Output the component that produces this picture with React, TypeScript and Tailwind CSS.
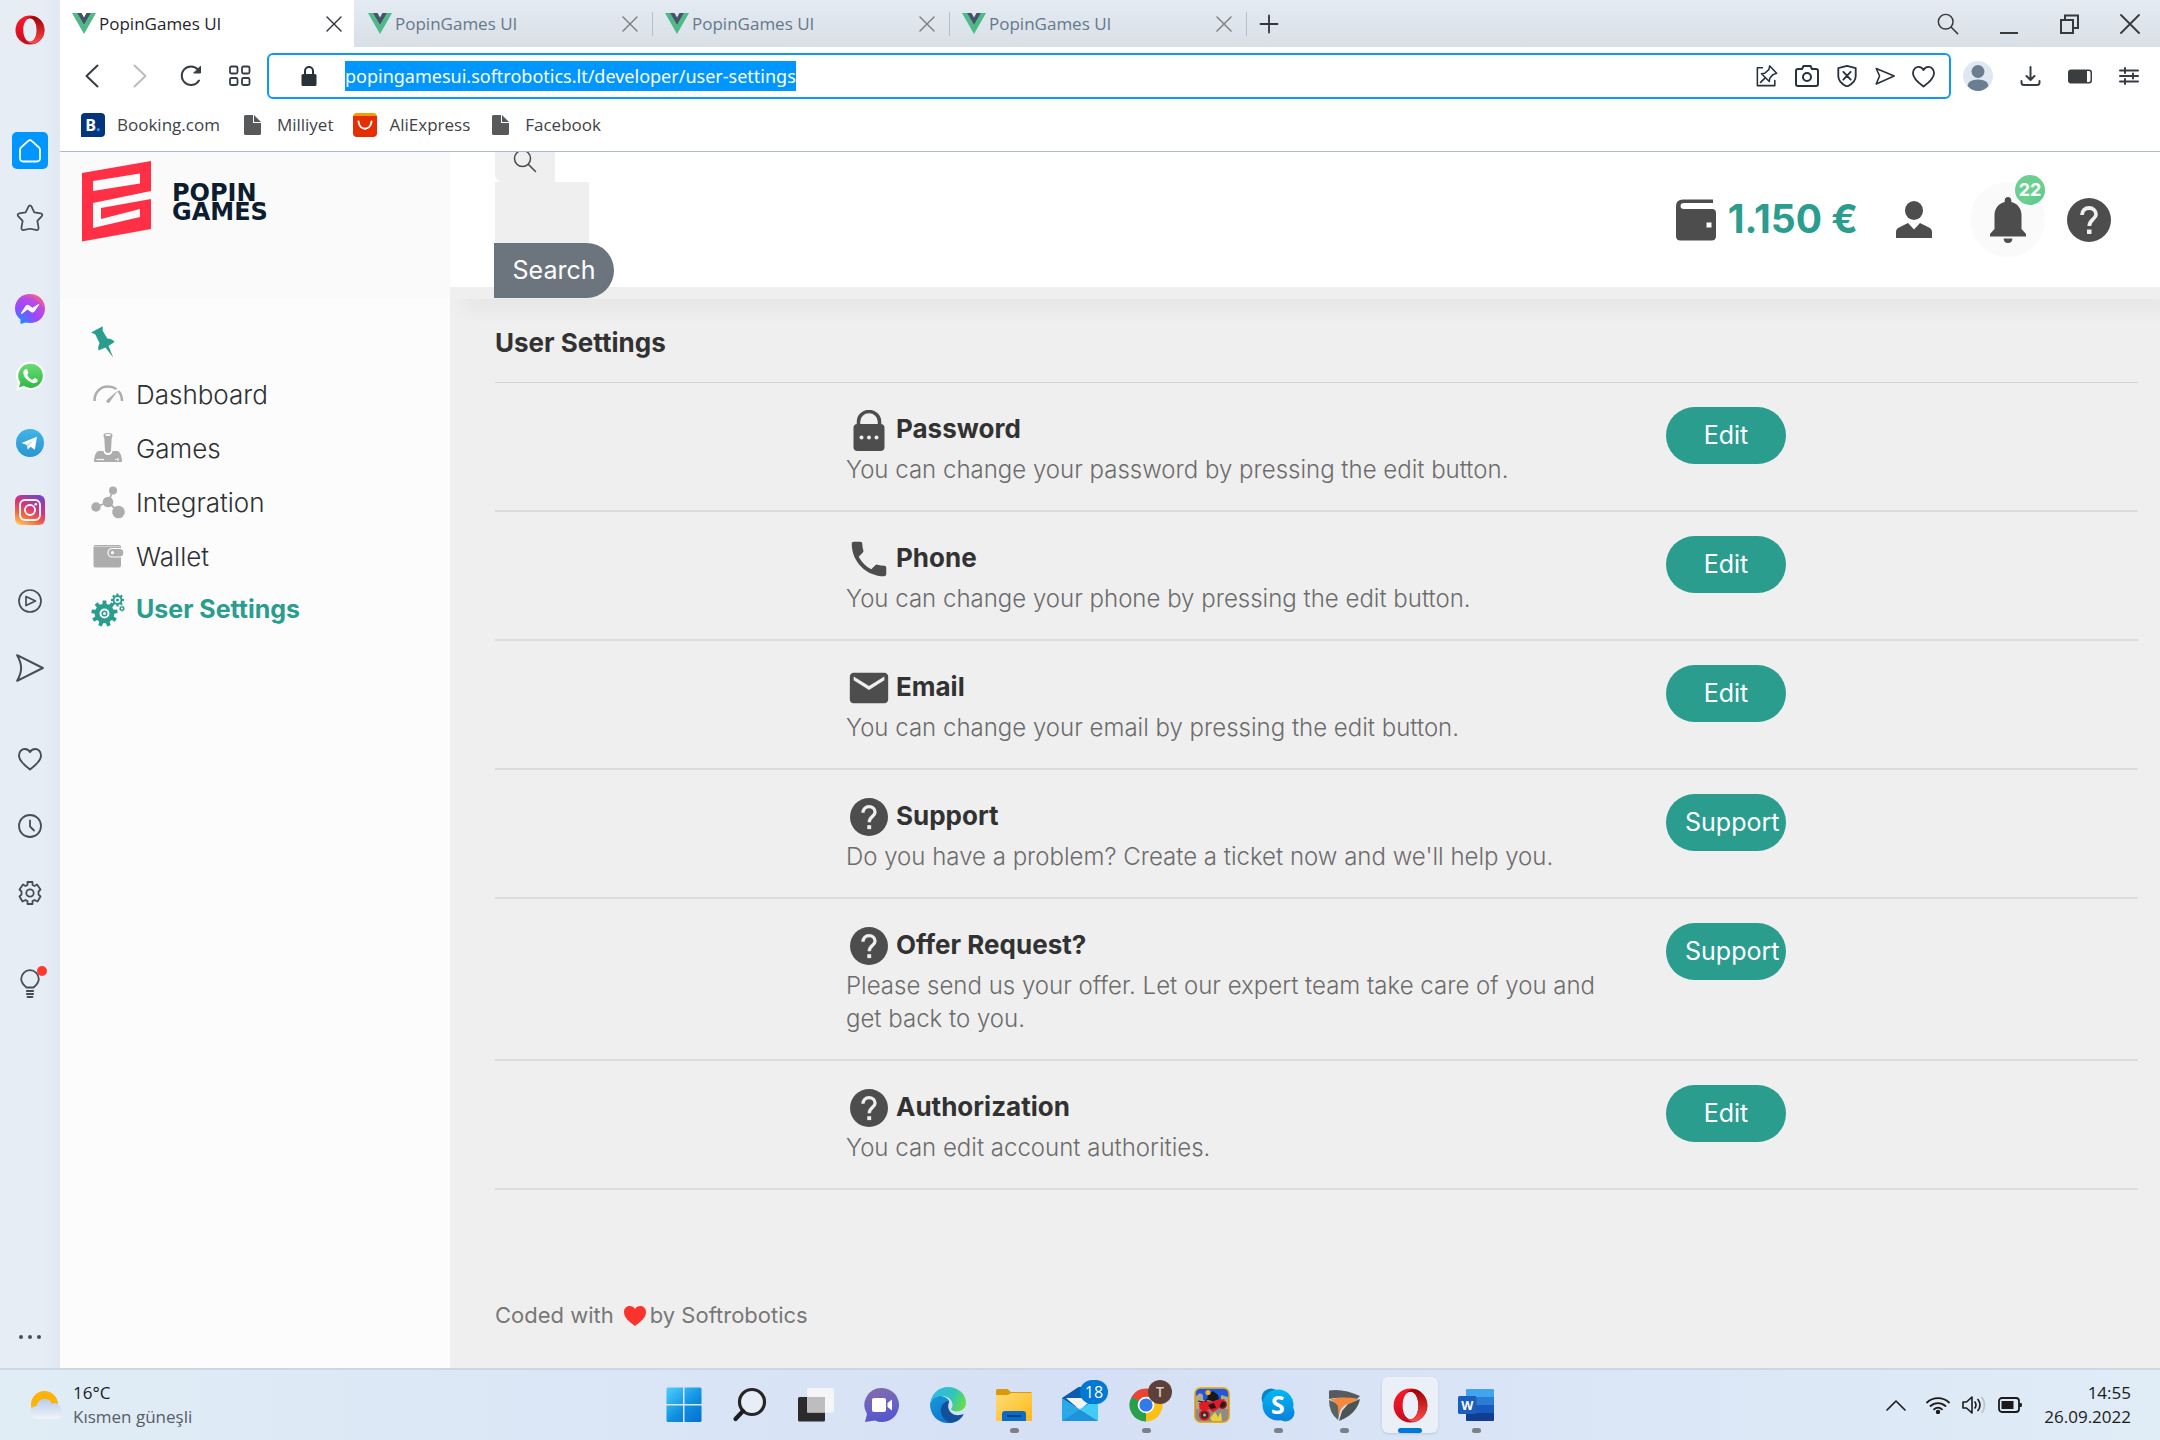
import React from "react";
import { MdPhone, MdEmail } from "react-icons/md";

type P = { className?: string };

const Svg = ({ className = "", vb = "0 0 24 24", sw = 1.6, children }: { className?: string; vb?: string; sw?: number; children: React.ReactNode }) => (
  <svg viewBox={vb} className={className} fill="none" stroke="currentColor" strokeWidth={sw} strokeLinecap="round" strokeLinejoin="round" aria-hidden="true">
    {children}
  </svg>
);

function gear(cx: number, cy: number, outer: number, inner: number, teeth: number, hole: number) {
  const pts: string[] = [];
  const step = (Math.PI * 2) / teeth;
  for (let i = 0; i < teeth; i++) {
    const a = i * step - Math.PI / 2;
    const spots: [number, number][] = [
      [-0.3, inner],
      [-0.2, outer],
      [0.2, outer],
      [0.3, inner],
    ];
    for (const [o, r] of spots) {
      pts.push(`${(cx + r * Math.cos(a + o * step)).toFixed(2)} ${(cy + r * Math.sin(a + o * step)).toFixed(2)}`);
    }
  }
  return `M${pts.join("L")}Z M${cx + hole} ${cy}A${hole} ${hole} 0 1 0 ${cx - hole} ${cy}A${hole} ${hole} 0 1 0 ${cx + hole} ${cy}Z`;
}

/* ---------- browser icons ---------- */

const OperaLogo = ({ className, id }: P & { id: string }) => (
  <svg viewBox="0 0 32 32" className={className} aria-hidden="true">
    <defs>
      <linearGradient id={`${id}a`} x1="0" y1="0" x2="0.4" y2="1">
        <stop offset="0" stopColor="#ff1b2d" />
        <stop offset="1" stopColor="#c40a1c" />
      </linearGradient>
      <linearGradient id={`${id}b`} x1="0" y1="0" x2="0" y2="1">
        <stop offset="0" stopColor="#9c0000" />
        <stop offset="1" stopColor="#ff4b4b" />
      </linearGradient>
    </defs>
    <path fillRule="evenodd" fill={`url(#${id}a)`} d="M16 0.5a15.5 15.5 0 1 0 0 31a15.5 15.5 0 1 0 0-31ZM16 3.5c4.2 0 7.2 5.500 7.200 12.500s-3 12.500-7.200 12.500s-7.200-5.500-7.200-12.500S11.800 3.500 16 3.500Z" />
    <path fill={`url(#${id}b)`} d="M11.500 5.500c1.300-1.300 2.800-2 4.500-2c4.200 0 7.200 5.500 7.200 12.500s-3 12.500-7.200 12.500c-1.700 0-3.200-.7-4.500-2c4 5.500 10 5.500 14.500 1.200a15.500 15.500 0 0 0 0-23.400c-4.500-4.300-10.500-4.300-14.500 1.200Z" />
  </svg>
);

const VueLogo = ({ className }: P) => (
  <svg viewBox="0 0 24 21" className={className} aria-hidden="true">
    <path d="M0 0h5L12 12L19 0h5L12 21Z" fill="#4dba87" />
    <path d="M5 0h4.500L12 4.500L14.500 0H19L12 12Z" fill="#435466" />
  </svg>
);

const Close = ({ className }: P) => (
  <Svg className={className} vb="0 0 16 16" sw={1.4}>
    <path d="M1 1l14 14M15 1L1 15" />
  </Svg>
);

const SearchGlyph = ({ className, sw = 1.6 }: P & { sw?: number }) => (
  <Svg className={className} sw={sw}>
    <circle cx="9.500" cy="9.500" r="8" />
    <path d="M15.500 15.500L22.500 22.500" />
  </Svg>
);

const HeartLine = ({ className }: P) => (
  <Svg className={className} sw={1.9}>
    <path d="M12 22.500C6 18 1 13.500 1 8.500C1 4.500 3.800 2 6.800 2C9 2 11 3.200 12 5.200C13 3.200 15 2 17.200 2C20.200 2 23 4.500 23 8.500C23 13.500 18 18 12 22.500Z" />
  </Svg>
);

const SendLine = ({ className }: P) => (
  <Svg className={className} sw={1.7}>
    <path d="M1 1L23 12L1 23C5.500 15 5.500 9 1 1Z" />
  </Svg>
);

const StarLine = ({ className }: P) => (
  <Svg className={className} sw={1.5}>
    <path d="M10.700 2.200Q12 0 13.300 2.200L15.700 7.200L21.200 8Q23.500 8.600 22 10.600L18.300 14.500L19.300 20Q19.600 22.800 17 22.200L12 21.200L7 22.200Q4.400 22.800 4.700 20L5.700 14.500L2 10.600Q.5 8.600 2.800 8L8.300 7.200Z" />
  </Svg>
);

const HomeLine = ({ className }: P) => (
  <Svg className={className} sw={1.8}>
    <path d="M12 1.200Q13 1.200 14 2.200L21 8.500Q22 9.500 22 11V19Q22 22.500 18.500 22.500H5.500Q2 22.500 2 19V11Q2 9.500 3 8.500L10 2.200Q11 1.200 12 1.200Z" />
  </Svg>
);

const Messenger = ({ className }: P) => (
  <svg viewBox="0 0 30 30" className={className} aria-hidden="true">
    <defs>
      <radialGradient id="msg" cx="0.15" cy="1" r="1.15">
        <stop offset="0" stopColor="#1292ff" />
        <stop offset="0.5" stopColor="#9b46ff" />
        <stop offset="0.8" stopColor="#c04ae0" />
        <stop offset="1" stopColor="#ff6a70" />
      </radialGradient>
    </defs>
    <path fill="url(#msg)" d="M15 0C23.500 0 30 6 30 14.500S23.500 29 15 29c-1.500 0-3-.2-4.300-.5L5.500 30V25.500C2 23 0 19 0 14.500C0 6 6.500 0 15 0Z" />
    <path fill="#fff" d="M6 19L10.800 11.600Q12.200 10 14 11.200L17.500 13.800L23.500 10Q24.700 9.600 24 11L19.300 17.800Q18 19.200 16.300 18.200L12.500 15.500L6.800 20Q5.600 20.300 6 19Z" />
  </svg>
);

const WhatsApp = ({ className }: P) => (
  <svg viewBox="0 0 30 30" className={className} aria-hidden="true">
    <defs>
      <linearGradient id="wa" x1="0" y1="0" x2="0" y2="1">
        <stop offset="0" stopColor="#6bdc76" />
        <stop offset="1" stopColor="#2fb944" />
      </linearGradient>
    </defs>
    <path fill="#fdfdfd" d="M15.500 0.500A14.200 14.200 0 1 1 8.500 27L1 29.500L3 22A14.200 14.200 0 0 1 15.500 0.500Z" />
    <path fill="url(#wa)" d="M15.500 2.700A12.100 12.100 0 1 1 8.800 24.700L4 26.500L5.300 21.500A12.100 12.100 0 0 1 15.500 2.700Z" />
    <path fill="#fff" d="M10.300 8.300C11 7.900 11.800 8 12.200 8.700L13.400 11.500C13.500 12.400 12.300 13.300 12.300 13.900C13.500 16.300 15.300 18 17.600 18.800C18.400 18.600 19 17.200 19.800 17.100L22.800 18.600C23 21 21.200 22.300 18.900 22.200C13.500 21.200 9.200 17 8.300 12.300C8.200 10.500 9 9 10.300 8.300Z" />
  </svg>
);

const Telegram = ({ className }: P) => (
  <svg viewBox="0 0 28 28" className={className} aria-hidden="true">
    <defs>
      <linearGradient id="tg" x1="0" y1="0" x2="0" y2="1">
        <stop offset="0" stopColor="#41b4e6" />
        <stop offset="1" stopColor="#2a95d3" />
      </linearGradient>
    </defs>
    <circle cx="14" cy="14" r="14" fill="url(#tg)" />
    <path d="M5.500 14L21 7.800L18.800 20.800L14.500 17.800L12 20.500L10.500 15.800Z" fill="#fff" />
    <path d="M10.500 15.800L18.500 10.300L12.600 16.800L12 20.500Z" fill="#c5dceb" />
  </svg>
);

const Instagram = ({ className }: P) => (
  <svg viewBox="0 0 30 30" className={className} aria-hidden="true">
    <defs>
      <linearGradient id="ig" x1="0.2" y1="1" x2="0.7" y2="0">
        <stop offset="0" stopColor="#fdc25c" />
        <stop offset="0.3" stopColor="#f4643f" />
        <stop offset="0.6" stopColor="#d9317c" />
        <stop offset="1" stopColor="#7a45c4" />
      </linearGradient>
    </defs>
    <rect width="30" height="30" rx="6" fill="url(#ig)" />
    <g fill="none" stroke="#fff" strokeWidth="1.900">
      <rect x="5" y="5" width="20" height="20" rx="5" />
      <circle cx="15" cy="15" r="5" />
    </g>
    <circle cx="20.800" cy="9.200" r="1.300" fill="#fff" />
  </svg>
);

const PlayCircle = ({ className }: P) => (
  <Svg className={className} sw={1.7}>
    <circle cx="12" cy="12" r="11" />
    <path d="M8 7.500L17.500 12L8 16.500Z" />
  </Svg>
);

const Clock = ({ className }: P) => (
  <Svg className={className} sw={1.8}>
    <circle cx="12" cy="12" r="11" />
    <path d="M12 6.500V12.500L16 16.500" />
  </Svg>
);

const GearLine = ({ className }: P) => (
  <Svg className={className} sw={1.8}>
    <path d="M9.500 1H14.500V4Q15.500 4.500 16.500 5L19 3.500L22.500 8.500L20.500 10.500V13.500L22.500 15.500L19.500 20.500L16.500 19Q15.500 19.700 14.500 20V23H9.500V20Q8.500 19.700 7.500 19L4.500 20.500L1.500 15.500L3.500 13.500V10.500L1.500 8.500L5 3.500L7.500 5Q8.500 4.500 9.500 4Z" />
    <circle cx="12" cy="12" r="3.700" />
  </Svg>
);

const Bulb = ({ className }: P) => (
  <Svg className={className} vb="0 0 20 30" sw={1.8}>
    <path d="M6.500 18.500C3.500 16 1.200 13.500 1.200 10A8.800 8.800 0 0 1 18.800 10C18.800 13.500 16.500 16 13.500 18.500Z" />
    <path d="M6.800 22H13.200M6.800 25H13.200M7.500 28H12.500" />
  </Svg>
);

const PadLock = ({ className }: P) => (
  <svg viewBox="0 0 16 20" className={className} aria-hidden="true">
    <path d="M4 9V5a4 4 0 0 1 8 0V9" fill="none" stroke="currentColor" strokeWidth="2" />
    <rect x="0.500" y="8" width="15" height="12" rx="1.500" fill="currentColor" />
  </svg>
);

const FileIcon = () => (
  <svg viewBox="0 0 17 20" className="h-5 w-[17px]" fill="#58595b" aria-hidden="true">
    <path d="M0 1.500Q0 0 1.500 0H9V8H17V18.500Q17 20 15.500 20H1.500Q0 20 0 18.500Z" />
    <path d="M10 0L17 7H10Z" />
  </svg>
);

/* ---------- page icons ---------- */

const HelpCircle = ({ className }: P) => (
  <svg viewBox="0 0 44 44" className={className} aria-hidden="true">
    <circle cx="22" cy="22" r="22" fill="#4d4d4d" />
    <path d="M15 17C15 12.800 18 10 22 10C26 10 29 12.700 29 16.500C29 21 22.300 21.500 22.300 28" fill="none" stroke="#efefef" strokeWidth="3.800" />
    <rect x="20" y="31.500" width="4.500" height="4.500" fill="#efefef" />
  </svg>
);

const PasswordLock = ({ className }: P) => (
  <svg viewBox="0 0 32 41" className={className} aria-hidden="true">
    <path d="M5.500 16V11.500a10.500 10 0 0 1 21 0V16" fill="none" stroke="#4d4d4d" strokeWidth="3.500" />
    <rect x="0.500" y="14" width="31" height="27" rx="4" fill="#4d4d4d" />
    <g fill="#efefef">
      <circle cx="8.500" cy="27.500" r="2" />
      <circle cx="16" cy="27.500" r="2" />
      <circle cx="23.500" cy="27.500" r="2" />
    </g>
  </svg>
);

const WalletDark = ({ className }: P) => (
  <svg viewBox="0 0 40 42" className={className} aria-hidden="true">
    <path fill="#4d4d4d" fillRule="evenodd" d="M7 0.500H37V4H8Q4.500 4 4.500 7T8 10H36Q40 10 40 14V37Q40 41.500 35.500 41.500H4.500Q0 41.500 0 37V7Q0 .5 7 .5ZM30.500 23.500V28.500H35.500V23.500Z" />
  </svg>
);

const Person = ({ className }: P) => (
  <svg viewBox="0 0 36 37" className={className} fill="#4d4d4d" aria-hidden="true">
    <ellipse cx="18" cy="9.500" rx="9" ry="9.500" />
    <path d="M0 37V31Q0 28 3 26.500L12 22L18 28.500L24 22L33 26.500Q36 28 36 31V37Z" />
  </svg>
);

const Bell = ({ className }: P) => (
  <svg viewBox="0 0 36 46" className={className} fill="#4d4d4d" aria-hidden="true">
    <path d="M18 0C20 0 21.300 1.500 21.300 3.500V5C27.500 6.500 31.500 11.500 31.500 18V32L36 37V39.500H0V37L4.500 32V18C4.500 11.500 8.500 6.500 14.700 5V3.500C14.700 1.500 16 0 18 0Z" />
    <path d="M13.500 41.500H22.500Q22 46 18 46T13.500 41.500Z" />
  </svg>
);

const PopinMark = ({ className }: P) => (
  <svg viewBox="0 0 69 81" className={className} fill="#ff2f46" aria-hidden="true">
    <path fillRule="evenodd" d="M0 12L69 0V30L11 42V67L58 56V48L19 58V47L69 38V68L0 80.500ZM11 20V30L58 22.500V12.500Z" />
  </svg>
);

const PushPin = ({ className }: P) => (
  <svg viewBox="0 0 24 32" className={className} fill="#2a9d8f" aria-hidden="true">
    <path d="M0 6.500L11.800 0.300L11.600 4.500L16.300 12.500Q21.500 12.500 23.500 16L17.500 20L22.200 31.500L14.500 21.500L7.500 24.500Q6.500 20.500 8.500 17L4.200 8.200Z" />
  </svg>
);

const GaugeIcon = () => (
  <svg viewBox="0 0 34 34" className="size-[34px]" fill="#adadad" aria-hidden="true">
    <path d="M3.500 24C3.500 15 9.500 9.500 17 9.500Q21.500 9.500 25.500 12" fill="none" stroke="#adadad" strokeWidth="2.500" />
    <path d="M27.500 14Q31 18 31 24" fill="none" stroke="#adadad" strokeWidth="2.500" />
    <path d="M27.500 13L18.500 25.300Q17 26.500 15.800 25.300T16 22.800Z" />
  </svg>
);

const JoystickIcon = () => (
  <svg viewBox="0 0 34 34" className="size-[34px]" fill="#adadad" aria-hidden="true">
    <path d="M12.500 4Q12.500 2 17 2T21.500 4Q21.500 6 20.700 7L20 20Q19.500 22 17 22T14 20L13.300 7Q12.500 6 12.500 4Z" />
    <ellipse cx="17" cy="4" rx="3" ry="0.900" fill="#fcfcfc" />
    <path d="M7 20H12.500Q13 24 17 24T21.500 20H27Q31 23 31 31H3Q3 23 7 20Z" />
    <path d="M5.500 28.500H13" stroke="#fcfcfc" strokeWidth="1.200" />
    <path d="M24 28.500h1.500M27 27v3" stroke="#fcfcfc" strokeWidth="1.200" />
  </svg>
);

const NodesIcon = () => (
  <svg viewBox="0 0 34 34" className="size-[34px]" fill="#adadad" aria-hidden="true">
    <path d="M5 22L17 17L22 6M17 17L27.500 27" stroke="#adadad" strokeWidth="1.800" fill="none" />
    <circle cx="5" cy="22" r="4.700" />
    <circle cx="17" cy="17" r="5.300" />
    <circle cx="22" cy="5.500" r="4" />
    <circle cx="27.500" cy="27" r="6.300" />
  </svg>
);

const WalletLight = () => (
  <svg viewBox="0 0 34 34" className="size-[34px]" aria-hidden="true">
    <rect x="2.500" y="6" width="27.500" height="22.500" rx="2" fill="#adadad" />
    <path d="M3 7.500H29" stroke="#cfcfcf" />
    <rect x="17" y="9.500" width="16" height="8.500" rx="4.200" fill="#adadad" stroke="#fcfcfc" strokeWidth="1.200" />
    <circle cx="21.500" cy="13.700" r="1.600" fill="#fcfcfc" />
  </svg>
);

const GearsIcon = () => (
  <svg viewBox="0 0 34 34" className="size-[34px]" fill="#2a9d8f" fillRule="evenodd" aria-hidden="true">
    <path d={gear(13.5, 20.5, 13.2, 9.8, 9, 5)} />
    <circle cx="13.500" cy="20.500" r="3" />
    <circle cx="13.500" cy="20.500" r="1.500" fill="#fcfcfc" />
    <path d={gear(26.5, 7, 6.6, 4.9, 8, 3)} />
    <circle cx="26.500" cy="7" r="1.500" />
    <path d={gear(31, 15.5, 3, 2.2, 7, 1.1)} />
  </svg>
);

/* ---------- taskbar icons ---------- */

const Start = () => (
  <svg viewBox="0 0 36 36" className="size-9" aria-hidden="true">
    <defs>
      <linearGradient id="win" gradientUnits="userSpaceOnUse" x1="0" y1="0" x2="30" y2="36">
        <stop offset="0" stopColor="#4fd0ff" />
        <stop offset="0.600" stopColor="#1090e0" />
        <stop offset="1" stopColor="#0673d2" />
      </linearGradient>
    </defs>
    <path fill="url(#win)" d="M1.500 .5H17V17H.5V1.500ZM18.500 .5H34.500L35.500 1.500V17H18.500ZM.5 18.500H17V35H1.500L.5 34ZM18.500 18.500H35.500V34L34.500 35H18.500Z" />
  </svg>
);

const TaskSearch = () => (
  <svg viewBox="0 0 36 36" className="size-9" aria-hidden="true">
    <circle cx="20" cy="15" r="12.500" fill="#e8eef8" stroke="#262626" strokeWidth="3.200" />
    <path d="M11 24L3.500 32" stroke="#1c1c1c" strokeWidth="4.200" strokeLinecap="round" />
  </svg>
);

const TaskView = () => (
  <svg viewBox="0 0 36 36" className="size-9" aria-hidden="true">
    <rect x="0" y="10" width="27" height="24.500" rx="1.500" fill="#2b2b2b" />
    <rect x="9" y="1" width="27" height="24.500" rx="1.500" fill="#f5f5f7" />
    <path d="M9 10H27V25.500H9Z" fill="#bdbdbd" />
  </svg>
);

const Chat = () => (
  <svg viewBox="0 0 36 36" className="size-9" aria-hidden="true">
    <defs>
      <linearGradient id="chat" x1="0.300" y1="0" x2="0.500" y2="1">
        <stop offset="0" stopColor="#8469a9" />
        <stop offset="0.500" stopColor="#6b62c4" />
        <stop offset="1" stopColor="#5355cc" />
      </linearGradient>
    </defs>
    <path fill="url(#chat)" d="M18 1A17 17 0 1 1 11 33.500L1 35L3 27A17 17 0 0 1 18 1Z" />
    <rect x="8" y="11" width="14" height="14" rx="2" fill="#fff" />
    <path d="M23.500 16L28 12.500V23.500L23.500 20Z" fill="#fff" />
  </svg>
);

const Edge = () => (
  <svg viewBox="0 0 36 36" className="size-9" aria-hidden="true">
    <defs>
      <linearGradient id="eg1" x1="0" y1="0.300" x2="1" y2="0.600">
        <stop offset="0" stopColor="#33b8e8" />
        <stop offset="0.550" stopColor="#2fc4c0" />
        <stop offset="1" stopColor="#66dd48" />
      </linearGradient>
      <linearGradient id="eg2" x1="0" y1="0" x2="0.700" y2="1">
        <stop offset="0" stopColor="#1899d8" />
        <stop offset="1" stopColor="#0c6fd0" />
      </linearGradient>
    </defs>
    <path fill="url(#eg2)" d="M0 17C2 10 8 8 13 9.500C18 11 20 14 19 16C14 19 15 28 23 30C28 31.500 32 28 33.500 27.500C30 34 24 36.500 17 36C7 35.500 0 27.500 0 17Z" />
    <path fill="#12509c" d="M19 14C9 15 7 30 20 35.800C26 35.500 31 32 33.800 27C30 28.500 25 29 21.500 26C18 23 17.500 19 19 14Z" />
    <path fill="url(#eg1)" d="M0.200 16C1.500 6.500 9 0 18 0C28 0 36 7 36 15.500C36 21 32 24.500 27 24.500C23.500 24.500 21 23.500 21 22.300C21 21.500 22.500 20.700 22.500 18C22.500 13 18 9 12 9C7 9 2.500 11 .2 16Z" />
  </svg>
);

const Explorer = () => (
  <svg viewBox="0 0 36 36" className="size-9" aria-hidden="true">
    <defs>
      <linearGradient id="fold" x1="0" y1="0" x2="1" y2="1">
        <stop offset="0" stopColor="#ffdc7a" />
        <stop offset="1" stopColor="#fdb913" />
      </linearGradient>
    </defs>
    <path d="M0 3.500Q0 2 1.500 2H11.500L15 5H34.500Q36 5 36 6.500V15H0Z" fill="#dd9a08" />
    <path d="M0 8H12L15 6H36V34H0Z" fill="url(#fold)" />
    <path d="M6 34V27Q6 24 9 24H27Q30 24 30 27V34Z" fill="#0c6cc4" />
    <path d="M11 29H25" stroke="#0a3f86" strokeWidth="1.800" />
  </svg>
);

const Mail = () => (
  <svg viewBox="0 0 36 36" className="size-9" aria-hidden="true">
    <path d="M0 11L18 -1L36 11V20H0Z" fill="#0b5cad" />
    <path d="M4 11H32L18 23Z" fill="#f4f4f6" />
    <path d="M0 11L36 34H0Z" fill="#29a9e8" />
    <path d="M36 11L18 22L36 34Z" fill="#40cdf5" />
    <path d="M0 34L18 22.500L36 34Z" fill="#1e93dc" />
  </svg>
);

const Chrome = () => (
  <svg viewBox="0 0 36 36" className="size-9" aria-hidden="true">
    <path d="M18 18L3.700 9.700A16.500 16.500 0 0 1 32.300 9.700Z" fill="#e94335" />
    <path d="M18 18L32.300 9.700A16.500 16.500 0 0 1 18 34.500Z" fill="#fcc014" />
    <path d="M18 18L18 34.500A16.500 16.500 0 0 1 3.700 9.700Z" fill="#2a9f4b" />
    <path d="M18 9.700H32.300L25 22L18 34.500Z" fill="#fcc014" />
    <path d="M3.700 9.700L11 22L18 26L18 18Z" fill="#2a9f4b" />
    <path d="M3.700 9.700H32.300V10.500H18L11 14Z" fill="#e94335" />
    <circle cx="18" cy="18" r="8.300" fill="#fff" />
    <circle cx="18" cy="18" r="6.600" fill="#3279ea" />
  </svg>
);

const MotoGame = () => (
  <svg viewBox="0 0 36 36" className="size-9" aria-hidden="true">
    <rect x="0.700" y="0.700" width="34.600" height="34.600" rx="6" fill="#8f8a83" />
    <path d="M2 6Q2 2 6 2H30Q34 2 34 6V13H2Z" fill="#1f58d8" />
    <path d="M2 9L6 6L9 8V22H2ZM27 8L34 10V22H27Z" fill="#b8a58a" />
    <path d="M16 31L21 25L24 30L27 25L28 34H18Z" fill="#e9cf3a" />
    <circle cx="10.500" cy="28" r="4.600" fill="#4a2522" stroke="#d61f22" strokeWidth="1.800" />
    <circle cx="10.500" cy="28" r="1.500" fill="#c9b7b0" />
    <circle cx="28.500" cy="17.500" r="3.800" fill="#2a1c1c" stroke="#b51a1e" strokeWidth="1.400" />
    <path d="M5 16L12 13.500L16 15L23 13L31 12L27 16L24 22L19 25L15 22L11 24L5.500 22Z" fill="#e31b23" />
    <path d="M14 18L20 16L22 21L17 22Z" fill="#2a1515" />
    <path d="M4 14L9 15M13 12L11 15" stroke="#191919" strokeWidth="1.200" />
    <path d="M14.500 7L19 4L24 8L25 12L19 14.500L13 12.500Z" fill="#191919" />
    <circle cx="14" cy="5.500" r="2.600" fill="#f0b424" />
    <rect x="0.700" y="0.700" width="34.600" height="34.600" rx="6" fill="none" stroke="#f0ad1d" strokeWidth="1.400" />
  </svg>
);

const Skype = () => (
  <svg viewBox="0 0 36 36" className="size-9" aria-hidden="true">
    <defs>
      <linearGradient id="sk" x1="0" y1="0" x2="0" y2="1">
        <stop offset="0" stopColor="#00b9f1" />
        <stop offset="1" stopColor="#0a80dd" />
      </linearGradient>
    </defs>
    <circle cx="11" cy="11" r="9.500" fill="#0a84c6" />
    <circle cx="25.500" cy="25.500" r="9" fill="#0b86dd" />
    <circle cx="18" cy="18" r="15.500" fill="url(#sk)" />
    <text x="18" y="27" textAnchor="middle" fontFamily="Open Sans, sans-serif" fontWeight="700" fontSize="25" fill="#fff">S</text>
  </svg>
);

const ShieldApp = () => (
  <svg viewBox="0 0 36 36" className="size-9" aria-hidden="true">
    <path d="M3 3.500Q17 1 34 9L30 13Q17 9 3 12Z" fill="#565c5c" />
    <path d="M3 13L15 18L12 33Q3 26 3 13Z" fill="#596161" />
    <path d="M34 12Q31 27 13 34L16 24L22 17Z" fill="#4d5454" />
    <path d="M4 12.500Q17 9 33 12Q25 16 19.500 18Q15 20 12.500 29L12 20Q12 17 4 12.500Z" fill="#f58a3c" />
  </svg>
);

const Word = () => (
  <svg viewBox="0 0 36 36" className="size-9" aria-hidden="true">
    <path d="M8 3Q8 2 9 2H35Q36 2 36 3V10H8Z" fill="#41a5ee" />
    <path d="M8 10H36V18H8Z" fill="#2b7cd3" />
    <path d="M8 18H36V26H8Z" fill="#185abd" />
    <path d="M8 26H36V33Q36 34 35 34H9Q8 34 8 33Z" fill="#103f91" />
    <rect x="0" y="9" width="18.500" height="18" rx="1.500" fill="#1b5ebe" />
    <text x="9.200" y="22.500" textAnchor="middle" fontFamily="Open Sans, sans-serif" fontWeight="700" fontSize="12.500" fill="#fff">W</text>
  </svg>
);

/* ---------- data ---------- */

const settings = [
  { icon: <PasswordLock className="h-[41px] w-8" />, title: "Password", text: "You can change your password by pressing the edit button.", action: "Edit" },
  { icon: <MdPhone className="size-[46px] text-[#4d4d4d]" />, title: "Phone", text: "You can change your phone by pressing the edit button.", action: "Edit" },
  { icon: <MdEmail className="size-[46px] text-[#4d4d4d]" />, title: "Email", text: "You can change your email by pressing the edit button.", action: "Edit" },
  { icon: <HelpCircle className="size-[38px]" />, title: "Support", text: "Do you have a problem? Create a ticket now and we'll help you.", action: "Support" },
  { icon: <HelpCircle className="size-[38px]" />, title: "Offer Request?", text: "Please send us your offer. Let our expert team take care of you and get back to you.", action: "Support" },
  { icon: <HelpCircle className="size-[38px]" />, title: "Authorization", text: "You can edit account authorities.", action: "Edit" },
];

const menu = [
  { icon: <GaugeIcon />, label: "Dashboard" },
  { icon: <JoystickIcon />, label: "Games" },
  { icon: <NodesIcon />, label: "Integration" },
  { icon: <WalletLight />, label: "Wallet" },
  { icon: <GearsIcon />, label: "User Settings", active: true },
];

const railGroups = [
  [
    { label: "Start page", icon: <span className="flex h-[37px] w-9 items-center justify-center rounded-[5px] bg-[#0096ff] text-white"><HomeLine className="size-6" /></span> },
    { label: "Pinboards", icon: <StarLine className="size-7" /> },
  ],
  [
    { label: "Messenger", icon: <Messenger className="size-[30px]" /> },
    { label: "WhatsApp", icon: <WhatsApp className="size-[30px]" /> },
    { label: "Telegram", icon: <Telegram className="size-7" /> },
    { label: "Instagram", icon: <Instagram className="size-[30px]" /> },
  ],
  [
    { label: "Player", icon: <PlayCircle className="size-6" /> },
    { label: "My Flow", icon: <SendLine className="size-7" /> },
  ],
  [
    { label: "Bookmarks", icon: <HeartLine className="size-6" /> },
    { label: "History", icon: <Clock className="size-6" /> },
    { label: "Settings", icon: <GearLine className="size-6" /> },
  ],
];

const tasks = [
  { label: "Start", icon: <Start /> },
  { label: "Search", icon: <TaskSearch /> },
  { label: "Task view", icon: <TaskView /> },
  { label: "Chat", icon: <Chat /> },
  { label: "Edge", icon: <Edge /> },
  { label: "File Explorer", icon: <Explorer />, open: true },
  { label: "Mail", icon: <Mail />, badge: <span className="absolute top-[3px] left-7 flex h-6 w-7 items-center justify-center rounded-full bg-[#0078d4] text-base text-white">18</span> },
  { label: "Chrome", icon: <Chrome />, open: true, badge: <span className="absolute top-[3px] left-[30px] flex size-6 items-center justify-center rounded-full bg-[#5d4037] text-sm font-semibold text-[#d7ccc8]">T</span> },
  { label: "Moto game", icon: <MotoGame /> },
  { label: "Skype", icon: <Skype />, open: true },
  { label: "Shield", icon: <ShieldApp />, open: true },
  { label: "Opera", icon: <OperaLogo className="size-[35px]" id="opt" />, active: true },
  { label: "Word", icon: <Word />, open: true },
];

/* ---------- sections ---------- */

function Rail() {
  return (
    <nav aria-label="Browser sidebar" className="flex w-[60px] shrink-0 flex-col items-center bg-linear-to-r from-[#e6edf5] from-70% to-[#e0e8f1] text-[#454d59]">
      <button aria-label="Opera menu" className="flex h-[60px] items-center">
        <OperaLogo className="size-[30px]" id="opr" />
      </button>
      <div className="mt-[57px] flex flex-col gap-6">
        {railGroups.map((g, i) => (
          <div key={i} className="flex flex-col">
            {g.map((b) => (
              <button key={b.label} aria-label={b.label} className="flex h-[67px] w-[60px] items-center justify-center">
                {b.icon}
              </button>
            ))}
          </div>
        ))}
        <button aria-label="Tips" className="relative flex h-[67px] w-[60px] items-center justify-center">
          <Bulb className="h-[30px] w-5" />
          <span className="absolute top-4 right-[13px] size-[10px] rounded-full bg-[#ff3a2d]" />
        </button>
      </div>
      <button aria-label="Sidebar setup" className="mt-auto flex h-[62px] items-center gap-[5px]">
        <span className="size-[4px] rounded-full bg-current" />
        <span className="size-[4px] rounded-full bg-current" />
        <span className="size-[4px] rounded-full bg-current" />
      </button>
    </nav>
  );
}

function TabStrip() {
  return (
    <div className="flex h-[47px] bg-linear-to-b from-[#e4ebf3] to-[#d8dfe6] text-[17px] text-[#66788a]">
      {[0, 1, 2, 3].map((i) => (
        <div
          key={i}
          className={
            i === 0
              ? "mr-[2px] flex w-[294px] items-center bg-white pr-3 pl-3 text-[#1f262e]"
              : "flex w-[297px] items-center pr-4 pl-3"
          }
        >
          <VueLogo className="h-[21px] w-6 shrink-0" />
          <span className="ml-[3px] flex-1 whitespace-nowrap">PopinGames UI</span>
          <button aria-label="Close tab">
            <Close className={i === 0 ? "size-4 text-[#2b3036]" : "size-4 text-[#7b7b7b]"} />
          </button>
          {i > 0 && <span className="-mr-4 ml-[14px] h-6 w-px bg-[#b3bfcb]" />}
        </div>
      ))}
      <button aria-label="New tab" className="ml-3 text-[#30363c]">
        <Svg className="size-5" vb="0 0 20 20" sw={1.8}>
          <path d="M10 1.500V18.500M1.500 10H18.500" />
        </Svg>
      </button>
      <div className="ml-auto flex items-center gap-[41px] pr-5 text-[#36393d]">
        <button aria-label="Search tabs"><SearchGlyph className="size-[22px]" /></button>
        <button aria-label="Minimize" className="flex h-5 w-[18px] items-end"><span className="h-[2px] w-full bg-current" /></button>
        <button aria-label="Restore">
          <Svg className="size-5" vb="0 0 20 20" sw={2}>
            <path d="M2 6H14V19H2ZM6 6V1.500H19V14H14" strokeLinejoin="miter" />
          </Svg>
        </button>
        <button aria-label="Close window">
          <Svg className="size-5" vb="0 0 20 20" sw={1.8}>
            <path d="M1 1L19 19M19 1L1 19" />
          </Svg>
        </button>
      </div>
    </div>
  );
}

function AddressRow() {
  return (
    <div className="flex h-[58px] items-center pr-[21px] pl-6 text-[#363d44]">
      <div className="flex items-center">
        <button aria-label="Back"><Svg className="h-6 w-4" vb="0 0 16 24" sw={2}><path d="M13.500 1.500L2.500 12L13.500 22.500" /></Svg></button>
        <button aria-label="Forward" className="ml-8 text-[#bcbcbc]"><Svg className="h-6 w-4" vb="0 0 16 24" sw={2}><path d="M2.500 1.500L13.500 12L2.500 22.500" /></Svg></button>
        <button aria-label="Reload" className="ml-8">
          <Svg className="size-[22px]" vb="0 0 22 22" sw={2}>
            <path d="M19 15.500A9.300 9.300 0 1 1 18 4.500" />
            <path d="M20.500 1.500V8H14Z" fill="currentColor" strokeWidth="1" />
          </Svg>
        </button>
        <button aria-label="Speed dial" className="ml-[27px]">
          <Svg className="size-[22px]" vb="0 0 22 22" sw={1.8}>
            <rect x="1" y="1.500" width="7.500" height="7" rx="1.500" /><rect x="13" y="1.500" width="7.500" height="7" rx="1.500" />
            <rect x="1" y="13" width="7.500" height="7" rx="1.500" /><rect x="13" y="13" width="7.500" height="7" rx="1.500" />
          </Svg>
        </button>
      </div>
      <div className="ml-4 flex h-[46px] flex-1 items-center rounded-md border-2 border-[#0f98fb] bg-white pr-[14px] pl-8 text-[#29313a]">
        <PadLock className="h-5 w-4" />
        <input
          aria-label="Address"
          defaultValue="popingamesui.softrobotics.lt/developer/user-settings"
          className="ml-7 field-sizing-content h-[30px] bg-[#0096ff] font-['Noto_Sans'] text-[18px] text-white outline-none"
        />
        <div className="ml-auto flex items-center gap-[17px]">
          <button aria-label="Pin"><Svg className="size-[22px]" sw={1.7}><path d="M7 3H1.500V22.500H20.500V17M15 1L22.500 9L18.500 10.500L15 14.500L14.500 18L6 9.500L9.500 9L14 5ZM10 14L5 19" /></Svg></button>
          <button aria-label="Snapshot"><Svg className="size-6" sw={2}><path d="M7 5L8.500 2H15.500L17 5H21Q23 5 23 7V20Q23 22 21 22H3Q1 22 1 20V7Q1 5 3 5Z" /><circle cx="12" cy="13" r="4" /></Svg></button>
          <button aria-label="Ad blocker"><Svg className="size-[22px]" sw={2}><path d="M12 1L21.500 3.500V12C21.500 17.500 17.500 21 12 23.500C6.500 21 2.500 17.500 2.500 12V3.500ZM8 7.500L16 16M16 7.500L8 16" /></Svg></button>
          <button aria-label="Send to My Flow"><Svg className="size-5" sw={1.9}><path d="M1.500 3L23 12L1.500 21.500L5.500 12Z" /></Svg></button>
          <button aria-label="Bookmark"><HeartLine className="size-[23px]" /></button>
        </div>
      </div>
      <div className="ml-3 flex items-center gap-[27px]">
        <button aria-label="Profile">
          <svg viewBox="0 0 30 30" className="size-[30px]" aria-hidden="true">
            <circle cx="15" cy="15" r="15" fill="#dfe8f1" />
            <circle cx="15" cy="10.500" r="6.500" fill="#6b7d90" />
            <path d="M4.500 25Q5 18.500 15 18.500T25.500 25Q21 30 15 30T4.500 25Z" fill="#6b7d90" />
          </svg>
        </button>
        <button aria-label="Downloads"><Svg className="size-[21px]" vb="0 0 21 21" sw={2}><path d="M10.500 1V13.500M6.500 10L10.500 14L14.500 10M1.500 15V16.500Q1.500 19 4 19H17Q19.500 19 19.500 16.500V15" /></Svg></button>
        <button aria-label="Battery saver">
          <svg viewBox="0 0 24 15" className="h-[15px] w-6" aria-hidden="true">
            <rect x="0" y="0.500" width="24" height="14" rx="3" fill="#3b3e41" />
            <path d="M19 2H21Q22.500 2 22.500 4V11Q22.500 13 21 13H19Z" fill="#fff" />
          </svg>
        </button>
        <button aria-label="Easy setup"><Svg className="size-5" vb="0 0 20 20" sw={2}><path d="M1 4.500H19M1 10H19M1 15.500H19M6 2V7M14 7.500V12.500M6 13V18" /></Svg></button>
      </div>
    </div>
  );
}

function Bookmarks() {
  return (
    <div className="flex h-[47px] items-center border-b border-[#aebbc7] pb-[6px] pl-[21px] text-[17px] text-[#3e4348]">
      <a href="#booking" className="flex items-center gap-3">
        <span className="flex size-6 items-center justify-center rounded-[4px] rounded-bl-none bg-[#05347f] text-base font-bold text-white">B<span className="text-[#2aa7f0]">.</span></span>
        Booking.com
      </a>
      <a href="#milliyet" className="ml-6 flex items-center gap-4"><FileIcon />Milliyet</a>
      <a href="#ali" className="ml-5 flex items-center gap-3">
        <svg viewBox="0 0 24 24" className="size-6" aria-hidden="true">
          <rect width="24" height="10" rx="4" fill="#f99a00" />
          <path d="M0 3H24V20Q24 24 20 24H4Q0 24 0 20Z" fill="#e62e04" />
          <path d="M5.500 8.500C6.500 18 17.500 18 18.500 8.500" fill="none" stroke="#fff" strokeWidth="2" strokeLinecap="round" />
        </svg>
        AliExpress
      </a>
      <a href="#facebook" className="ml-[22px] flex items-center gap-4"><FileIcon />Facebook</a>
    </div>
  );
}

function SiteNav() {
  return (
    <aside className="w-[390px] shrink-0 bg-[#fcfcfc]">
      <div className="flex h-[146px] items-start gap-[21px] bg-[#fafafa] pt-[9px] pl-[22px]">
        <PopinMark className="h-[81px] w-[69px]" />
        <div className="pt-[23px] font-['DejaVu_Sans'] text-[24px] leading-[19px] font-bold text-[#0c1d2f]">
          <p>POPIN</p>
          <p>GAMES</p>
        </div>
      </div>
      <nav aria-label="Site" className="pt-7 pl-[31px] font-['Inter'] text-[#2e3033]">
        <button aria-label="Pin menu" className="mb-[9px] block"><PushPin className="h-8 w-6" /></button>
        <ul>
          {menu.map((m) => (
            <li key={m.label}>
              <a
                href="#menu"
                className={
                  m.active
                    ? "flex h-[54px] items-center gap-[11px] text-[25px] font-bold text-[#2a9d8f]"
                    : "flex h-[54px] items-center gap-[11px] text-[26px] font-light"
                }
              >
                {m.icon}
                {m.label}
              </a>
            </li>
          ))}
        </ul>
      </nav>
    </aside>
  );
}

function SiteHeader() {
  return (
    <>
      <header className="relative z-10 flex h-[135px] justify-between bg-white pr-[49px] pl-11">
        <form className="h-0" onSubmit={(e) => e.preventDefault()}>
          <span className="ml-px flex h-[30px] w-[60px] justify-center rounded-bl-lg bg-[#efefef] text-[#454a50]">
            <SearchGlyph className="-mt-[3px] size-6" sw={1.5} />
          </span>
          <input aria-label="Search" className="ml-px block h-[61px] w-[94px] bg-[#efefef] outline-none" />
          <button className="block h-[55px] w-[120px] rounded-r-full bg-[#6c757d] text-[25px] text-white">Search</button>
        </form>
        <div className="flex items-center">
          <WalletDark className="h-[42px] w-10" />
          <span className="ml-3 text-[39px] font-bold text-[#2a9d8f]">1.150 €</span>
          <button aria-label="Account" className="ml-[38px]"><Person className="h-[37px] w-9" /></button>
          <button aria-label="Notifications" className="relative ml-[38px] flex size-[75px] items-center justify-center rounded-full bg-[#fafafa]">
            <Bell className="h-[46px] w-9" />
            <span className="absolute -top-[7px] right-0 flex size-[30px] items-center justify-center rounded-full bg-linear-to-br from-[#6bd08f] from-60% to-[#4fc490] text-lg font-bold text-white">22</span>
          </button>
          <button aria-label="Help" className="ml-[22px]"><HelpCircle className="size-11" /></button>
        </div>
      </header>
      <div className="h-3 shadow-[12px_8px_20px_#00000010]" />
    </>
  );
}

function Settings() {
  return (
    <main className="flex flex-1 flex-col pr-[22px] pl-[45px]">
      <h1 className="pt-[26px] pb-[21px] text-[26px] leading-9 font-bold text-[#323232]">User Settings</h1>
      <div className="border-t border-[#d4d4d4]">
        {settings.map((s) => (
          <section key={s.title} className="grid grid-cols-[351fr_820fr_472fr] border-b-2 border-[#dcdcdc] py-6">
            <div className="col-start-2 pr-10">
              <h2 className="flex h-[46px] items-center gap-1 text-[26px] font-bold text-[#323232]">
                <span className="flex w-[46px] shrink-0 justify-center">{s.icon}</span>
                <span className="pb-1">{s.title}</span>
              </h2>
              <p className="text-[24px] leading-[33px] font-light text-[#6c6c6c]">{s.text}</p>
            </div>
            <div>
              <button className="h-[57px] w-[120px] rounded-full bg-[#2a9d8f] px-[19px] text-[25px] whitespace-nowrap text-white">{s.action}</button>
            </div>
          </section>
        ))}
      </div>
      <footer className="mt-auto flex items-center pt-8 pb-9 text-[22px] leading-[33px] text-[#777]">
        Coded with
        <svg viewBox="0 0 22 20" className="mr-1 ml-[10px] h-5 w-[22px]" fill="#fa332c" aria-label="love">
          <path d="M11 20C5 15.500 0 11.500 0 6C0 2.500 2.500 0 5.700 0C8 0 10 1.200 11 3C12 1.200 14 0 16.300 0C19.500 0 22 2.500 22 6C22 11.500 17 15.500 11 20Z" />
        </svg>
        by Softrobotics
      </footer>
    </main>
  );
}

function Taskbar() {
  return (
    <footer className="grid h-[72px] grid-cols-[1fr_auto_1fr] items-center border-t-2 border-[#cdd6e4] bg-linear-to-r from-[#e1edf5] via-[#d5e0f6] to-[#e0ecf6] font-['Open_Sans'] text-[17px] leading-6 text-[#1b1b1b]">
      <div className="flex items-center gap-[10px] pl-[29px]">
        <svg viewBox="0 0 34 30" className="h-[30px] w-[34px]" aria-hidden="true">
          <defs>
            <linearGradient id="cl" x1="0" y1="0" x2="0" y2="1">
              <stop offset="0" stopColor="#b9ccec" />
              <stop offset="1" stopColor="#f1f4f9" />
            </linearGradient>
          </defs>
          <circle cx="15.500" cy="14.500" r="13.500" fill="#fcb208" />
          <path d="M8 29Q1 29 1 22.500Q1 16.500 7.500 16Q9 9 16 9Q21 9 23 14Q26 12 29 14.500Q33.500 18 33.500 23Q33 29 27 29Z" fill="url(#cl)" />
        </svg>
        <div>
          <p>16°C</p>
          <p className="text-[#565d66]">Kısmen güneşli</p>
        </div>
      </div>
      <div className="flex gap-[10px]">
        {tasks.map((t) => (
          <button
            key={t.label}
            aria-label={t.label}
            className={t.active ? "relative flex size-14 items-center justify-center rounded-md bg-[#eaeff8] shadow-sm" : "relative flex size-14 items-center justify-center"}
          >
            {t.icon}
            {t.badge}
            {t.open && <span className="absolute bottom-0 left-6 h-[5px] w-[9px] rounded-full bg-[#7b8089]" />}
            {t.active && <span className="absolute bottom-0 left-4 h-[5px] w-6 rounded-full bg-[#0078d4]" />}
          </button>
        ))}
      </div>
      <div className="flex items-center justify-end pr-[29px]">
        <button aria-label="Hidden icons"><Svg className="h-[11px] w-5" vb="0 0 20 11" sw={1.6}><path d="M1 10L10 1L19 10" /></Svg></button>
        <Svg className="ml-5 h-[18px] w-6" vb="0 0 24 18" sw={1.8}>
          <path d="M1 6.500A16 16 0 0 1 23 6.500M4.500 10A11 11 0 0 1 19.500 10M8 13.300A6 6 0 0 1 16 13.300" />
          <circle cx="12" cy="16" r="1.300" fill="currentColor" />
        </Svg>
        <Svg className="ml-3 h-[18px] w-6" vb="0 0 24 18" sw={1.6}>
          <path d="M1 6V12H4.500L10 17V1L4.500 6ZM13 6Q15 9 13 12M16 3.500Q20 9 16 14.500" />
          <path d="M20 1.500Q25 9 20 16.500" stroke="#b8bfc7" />
        </Svg>
        <svg viewBox="0 0 24 16" className="ml-3 h-4 w-6" aria-hidden="true">
          <rect x="1" y="1" width="20" height="14" rx="3" fill="none" stroke="#1b1b1b" strokeWidth="1.800" />
          <rect x="3.500" y="4" width="12" height="8" fill="#1b1b1b" />
          <path d="M21.500 6H23Q24 6 24 8T23 10H21.500Z" fill="#1b1b1b" />
        </svg>
        <div className="ml-[22px] text-right">
          <p>14:55</p>
          <p>26.09.2022</p>
        </div>
      </div>
    </footer>
  );
}

export default function App() {
  return (
    <div className="flex min-h-screen flex-col bg-white font-['Open_Sans',sans-serif]">
      <div className="flex flex-1">
        <Rail />
        <div className="flex min-w-0 flex-1 flex-col">
          <TabStrip />
          <AddressRow />
          <Bookmarks />
          <div className="flex flex-1">
            <SiteNav />
            <div className="flex flex-1 flex-col overflow-hidden bg-[#efefef] font-['Inter',sans-serif]">
              <SiteHeader />
              <Settings />
            </div>
          </div>
        </div>
      </div>
      <Taskbar />
    </div>
  );
}
